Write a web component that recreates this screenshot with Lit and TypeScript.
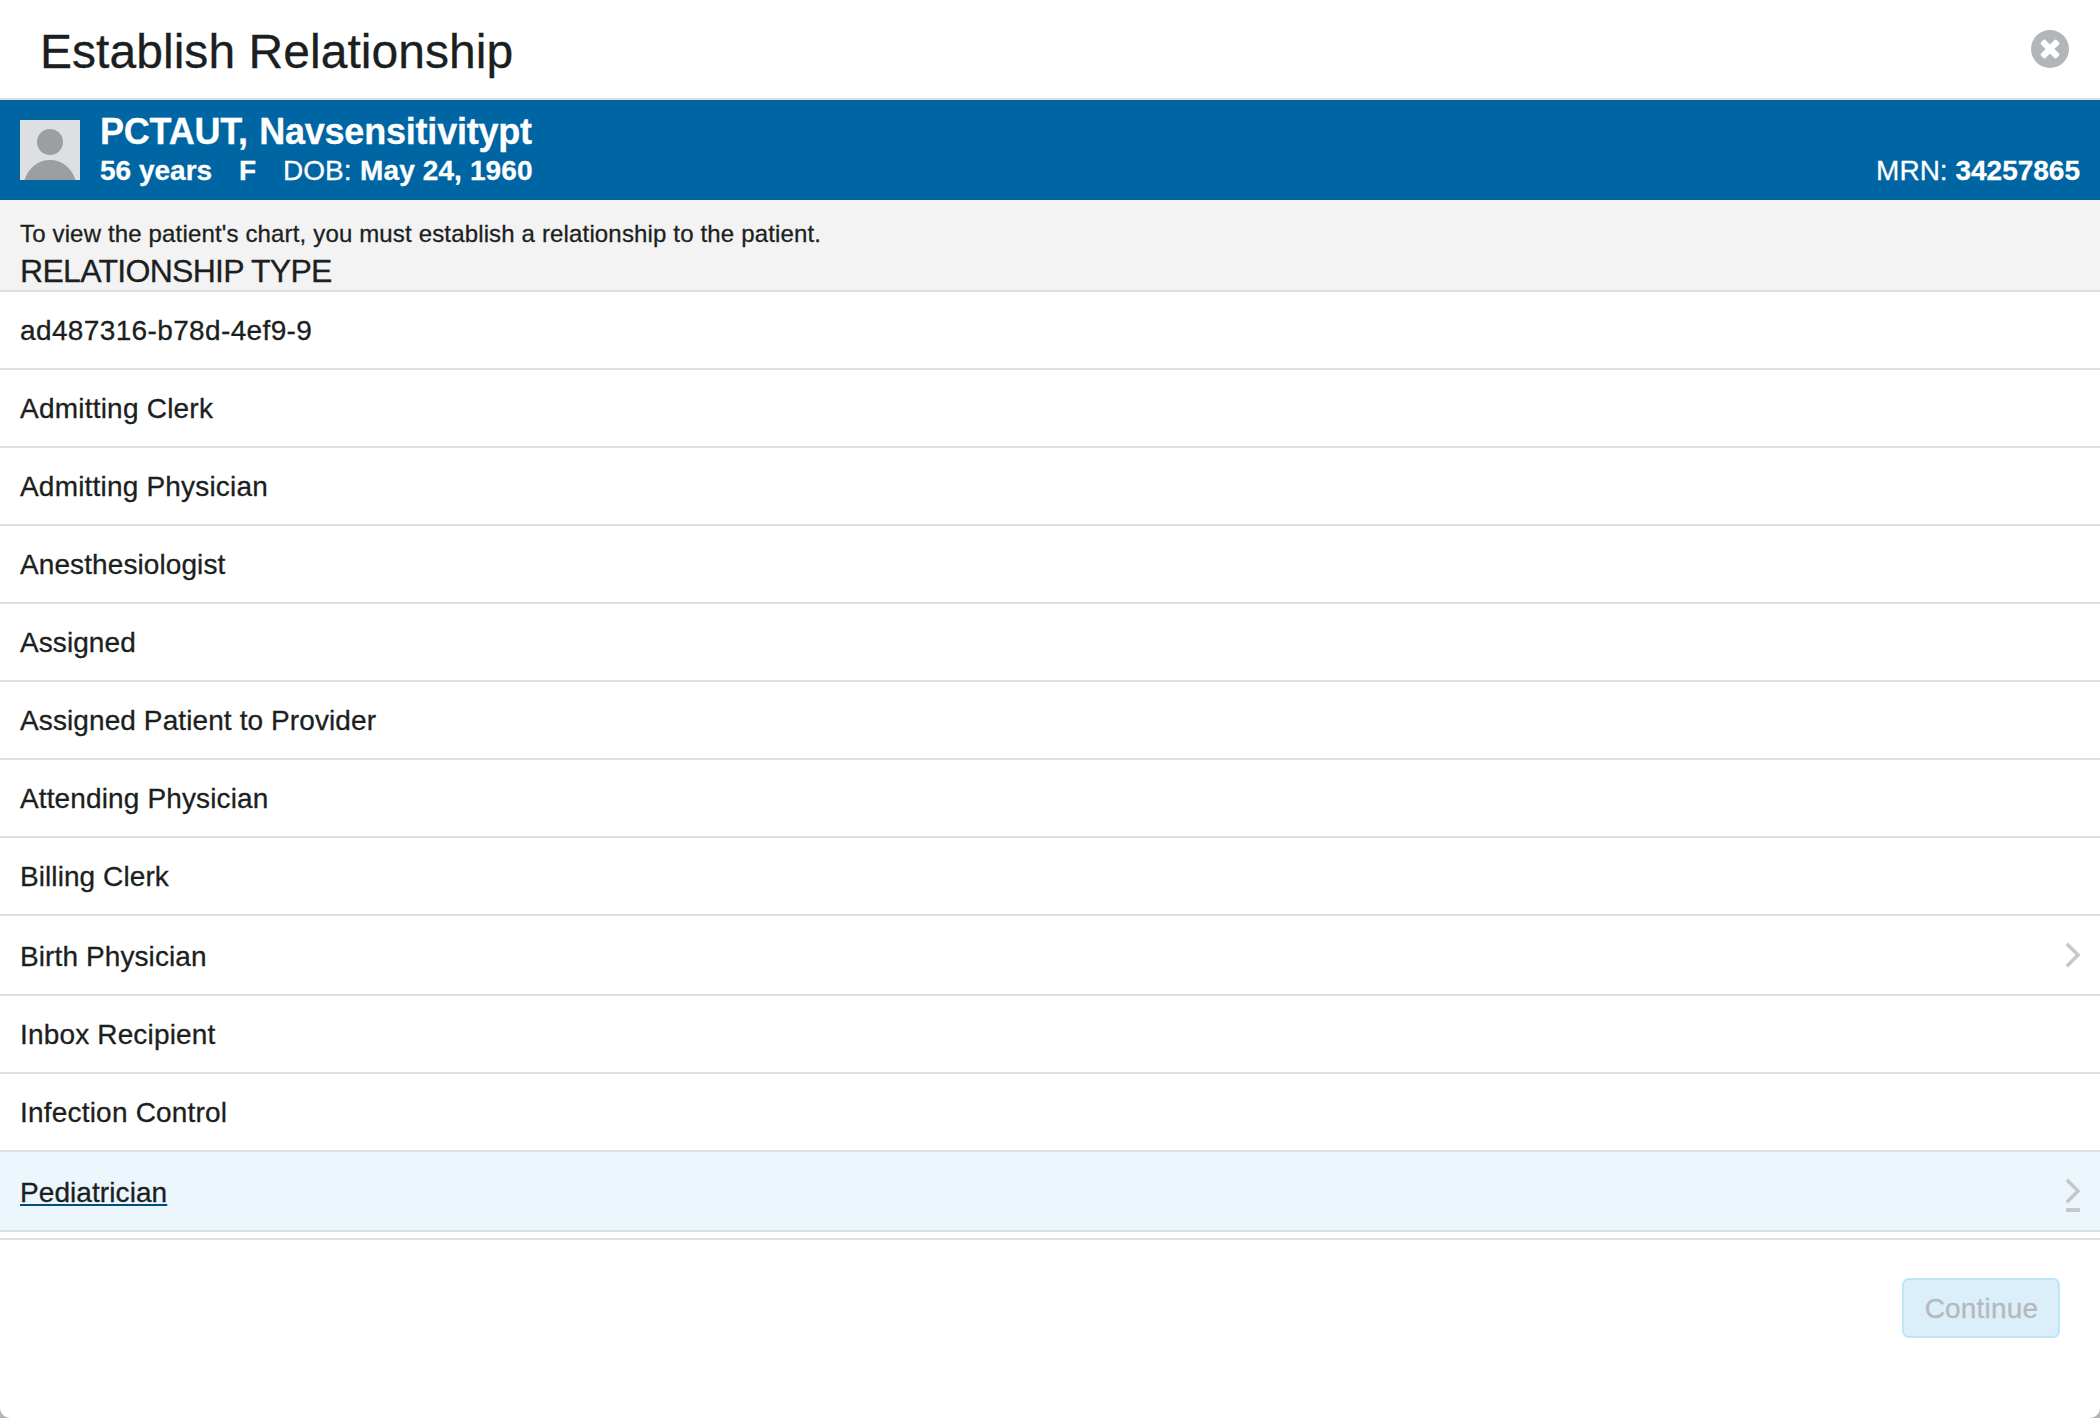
import { LitElement, html, css, nothing } from "lit";
import { customElement, property, state } from "lit/decorators.js";
import { classMap } from "lit/directives/class-map.js";
import { styleMap } from "lit/directives/style-map.js";

interface RelationshipType {
  label: string;
  /** Letter spacing in pixels. */
  tracking: number;
  expandable?: boolean;
}

const TYPES: RelationshipType[] = [
  { label: "ad487316-b78d-4ef9-9", tracking: 0.367 },
  { label: "Admitting Clerk", tracking: 0.22 },
  { label: "Admitting Physician", tracking: 0.19 },
  { label: "Anesthesiologist", tracking: 0.092 },
  { label: "Assigned", tracking: 0.08 },
  { label: "Assigned Patient to Provider", tracking: 0.101 },
  { label: "Attending Physician", tracking: 0.13 },
  { label: "Billing Clerk", tracking: 0.08 },
  { label: "Birth Physician", tracking: 0.1, expandable: true },
  { label: "Inbox Recipient", tracking: 0.162 },
  { label: "Infection Control", tracking: 0.2 },
  { label: "Pediatrician", tracking: 0.08, expandable: true },
];

@customElement("patient-banner")
class PatientBanner extends LitElement {
  static styles = css`
    :host {
      display: flex;
      box-sizing: border-box;
      height: 100px;
      padding: 0 20px;
      background: #0065a3;
      color: #fff;
      font-size: 28px;
      line-height: 31px;
      white-space: nowrap;
    }
    .avatar {
      width: 60px;
      height: 60px;
      margin: 20px 20px 0 0;
      flex: none;
    }
    .info {
      flex: 1;
      padding-top: 11px;
    }
    .name {
      font-size: 36px;
      line-height: 41px;
      font-weight: 700;
      letter-spacing: -0.21px;
      word-spacing: 1.5px;
    }
    .facts {
      display: flex;
      margin-top: 3px;
    }
    .age {
      width: 139px;
    }
    .sex {
      width: 44px;
    }
    .dob {
      width: 77px;
    }
    .born {
      letter-spacing: 0.12px;
    }
    .mrn {
      padding-top: 55px;
    }
    b {
      font-weight: 700;
    }
  `;

  render() {
    return html`
      <svg class="avatar" viewBox="0 0 60 60">
        <rect width="60" height="60" fill="#dedfe2" />
        <circle cx="30" cy="22" r="13" fill="#9b9fa2" />
        <path d="M4.500 60C8.500 47.500 18.500 40 30 40s21.500 7.500 25.500 20z" fill="#9b9fa2" />
      </svg>
      <div class="info">
        <div class="name">PCTAUT, Navsensitivitypt</div>
        <div class="facts">
          <b class="age">56 years</b>
          <b class="sex">F</b>
          <span class="dob">DOB:</span>
          <b class="born">May 24, 1960</b>
        </div>
      </div>
      <div class="mrn">MRN: <b>34257865</b></div>
    `;
  }
}

@customElement("relationship-row")
class RelationshipRow extends LitElement {
  @property({ attribute: false }) item!: RelationshipType;
  @property({ type: Boolean }) active = false;

  static styles = css`
    :host {
      display: block;
    }
    .row {
      display: flex;
      justify-content: space-between;
      box-sizing: border-box;
      height: 78px;
      padding: 23px 20px 0;
      border-bottom: 2px solid #dedfe0;
      font-size: 28px;
      line-height: 31px;
      cursor: pointer;
    }
    .expandable {
      height: 80px;
      padding-top: 25px;
    }
    .active {
      background: #ebf6fd;
    }
    .active .label {
      text-decoration: underline 2px #004f80;
      text-underline-offset: 2px;
      text-decoration-skip-ink: none;
    }
    .chevron {
      display: block;
      width: 14px;
      height: 40px;
    }
  `;

  render() {
    const { label, tracking, expandable } = this.item;
    return html`
      <div class=${classMap({ row: true, expandable: !!expandable, active: this.active })}>
        <span class="label" style=${styleMap({ letterSpacing: `${tracking}px` })}>${label}</span>
        ${expandable
          ? html`<svg class="chevron" viewBox="0 0 14 40">
              <path d="M0.800 2.800L12 14L0.800 25.200" fill="none" stroke="#c8c8c8" stroke-width="3.600" />
              ${this.active ? html`<svg><rect y="31" width="14" height="4" fill="#c8c8c8" /></svg>` : nothing}
            </svg>`
          : nothing}
      </div>
    `;
  }
}

@customElement("app-root")
class AppRoot extends LitElement {
  @state() private selected = TYPES.length - 1;

  static styles = css`
    :host {
      display: block;
      height: 100vh;
      background: #b4b4b4;
      font-family: "Liberation Sans", Arial, sans-serif;
      color: #1c1f21;
      -webkit-text-stroke: 0.3px currentColor;
      overflow: hidden;
    }
    .dialog {
      display: flex;
      flex-direction: column;
      height: 100%;
      background: #fff;
      border-radius: 0 0 10px 10px;
      overflow: hidden;
    }
    .header {
      display: flex;
      justify-content: space-between;
      box-sizing: border-box;
      height: 100px;
      padding: 25px 31px 0 40px;
      border-bottom: 2px solid #dedfe0;
    }
    .title {
      margin: 0;
      font-size: 48px;
      line-height: 53px;
      font-weight: 400;
      letter-spacing: 0.04px;
    }
    .close {
      width: 38px;
      height: 38px;
      margin-top: 5px;
    }
    .prompt {
      box-sizing: border-box;
      height: 92px;
      padding: 20px 20px 0;
      background: #f3f3f3;
      border-bottom: 2px solid #dedfe0;
    }
    .intro {
      font-size: 24px;
      line-height: 27px;
      letter-spacing: 0.155px;
    }
    .heading {
      margin: 6px 0 0;
      font-size: 32px;
      line-height: 36px;
      font-weight: 400;
      letter-spacing: -0.7px;
    }
    .footer {
      display: flex;
      justify-content: flex-end;
      align-items: flex-start;
      flex: 1;
      margin-top: 6px;
      padding: 38px 40px 0;
      border-top: 2px solid #dedfe0;
    }
    .continue {
      box-sizing: border-box;
      width: 158px;
      height: 60px;
      padding: 0 0 0 1px;
      border: 2px solid #bfe4f8;
      border-radius: 7px;
      background: #dbeffa;
      color: #b5b9bb;
      font: 28px/31px "Liberation Sans", Arial, sans-serif;
      letter-spacing: 0.2px;
    }
  `;

  render() {
    return html`
      <div class="dialog">
        <div class="header">
          <h1 class="title">Establish Relationship</h1>
          <svg class="close" viewBox="0 128 1536 1536">
            <path
              fill="#b2b6b8"
              d="M1149 1122q0-26-19-45L949 896l181-181q19-19 19-45 0-27-19-46l-90-90q-19-19-46-19-26 0-45 19L768 715 587 534q-19-19-45-19-27 0-46 19l-90 90q-19 19-19 46 0 26 19 45l181 181-181 181q-19 19-19 45 0 27 19 46l90 90q19 19 46 19 26 0 45-19l181-181 181 181q19 19 45 19 27 0 46-19l90-90q19-19 19-46zM1536 896A768 768 0 1 1 0 896A768 768 0 1 1 1536 896z"
              fill-rule="evenodd"
            />
          </svg>
        </div>
        <patient-banner></patient-banner>
        <div class="prompt">
          <div class="intro">To view the patient's chart, you must establish a relationship to the patient.</div>
          <h2 class="heading">RELATIONSHIP TYPE</h2>
        </div>
        <div>
          ${TYPES.map(
            (item, i) => html`<relationship-row
              .item=${item}
              ?active=${i === this.selected}
              @click=${() => (this.selected = i)}
            ></relationship-row>`,
          )}
        </div>
        <div class="footer"><button class="continue" disabled>Continue</button></div>
      </div>
    `;
  }
}
